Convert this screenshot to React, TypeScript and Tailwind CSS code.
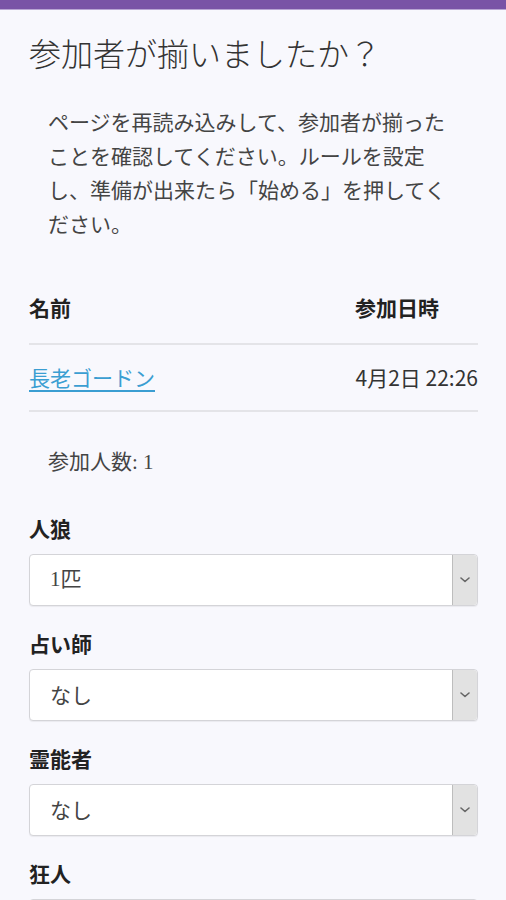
import React from "react";

const font = { fontFamily: '"Noto Sans CJK JP", "Noto Sans", sans-serif' };

function Chevron() {
  return (
    <svg width="10" height="6" viewBox="0 0 10 6" fill="none">
      <path d="M1 1l4 3.5L9 1" stroke="#666" strokeWidth="1.6" strokeLinecap="round" strokeLinejoin="round" />
    </svg>
  );
}

function FakeSelect({ value, serif }: { value: string; serif?: boolean }) {
  return (
    <div className="flex h-[52px] w-full items-stretch rounded-[4px] border border-[#d4d4d8] bg-white shadow-[0_1px_1px_rgba(0,0,0,0.06)]">
      <div
        className="flex flex-1 items-center pl-[20px] text-[21px] text-[#444]"
        style={serif ? { fontFamily: '"Liberation Serif", "Noto Sans CJK JP", serif' } : undefined}
      >
        {value}
      </div>
      <div className="my-[0px] flex w-[25px] items-center justify-center rounded-r-[4px] border-l border-[#bdbdbd] bg-[#e2e2e2]">
        <Chevron />
      </div>
    </div>
  );
}

function Field({ label, value, serif }: { label: string; value: string; serif?: boolean }) {
  return (
    <div className="mb-[23px]">
      <div className="mb-[12px] h-[28px] text-[21px] font-bold leading-[28px] text-[#222]">{label}</div>
      <FakeSelect value={value} serif={serif} />
    </div>
  );
}

export default function App() {
  return (
    <div className="min-h-[900px] bg-[#f8f8fd]" style={font}>
      <div className="h-[9px] bg-[#7953a6]" />
      <div className="h-[1px] bg-[#b8a5d3]" />
      <div className="pl-[29px] pr-[28px]">
        <h1 className="mt-[24px] h-[37px] text-[32px] font-light leading-[37px] text-[#333]">参加者が揃いましたか？</h1>
        <p className="mt-[33px] pl-[19px] pr-[30px] text-[21px] leading-[34px] text-[#444]">
          ページを再読み込みして、参加者が揃ったことを確認してください。ルールを設定し、準備が出来たら「始める」を押してください。
        </p>
        <div className="mt-[33px]">
          <div className="flex h-[70px] items-center justify-between text-[21px] font-bold text-[#222]">
            <span>名前</span>
            <span className="w-[123px]">参加日時</span>
          </div>
          <div className="flex h-[69px] items-center justify-between border-t-2 border-b-2 border-[#e4e4e8] text-[21px]">
            <a href="#" className="text-[#3b9ed2] underline underline-offset-[4px]">長老ゴードン</a>
            <span className="text-[#333]">4月2日 22:26</span>
          </div>
        </div>
        <div
          className="mt-[36px] h-[28px] pl-[19px] text-[21px] leading-[28px] text-[#444]"
          style={{ fontFamily: '"Liberation Serif", "Noto Sans CJK JP", serif' }}
        >
          参加人数: 1
        </div>
        <div className="mt-[38px]">
          <Field label="人狼" value="1匹" serif />
          <Field label="占い師" value="なし" />
          <Field label="霊能者" value="なし" />
          <Field label="狂人" value="なし" />
        </div>
      </div>
    </div>
  );
}
